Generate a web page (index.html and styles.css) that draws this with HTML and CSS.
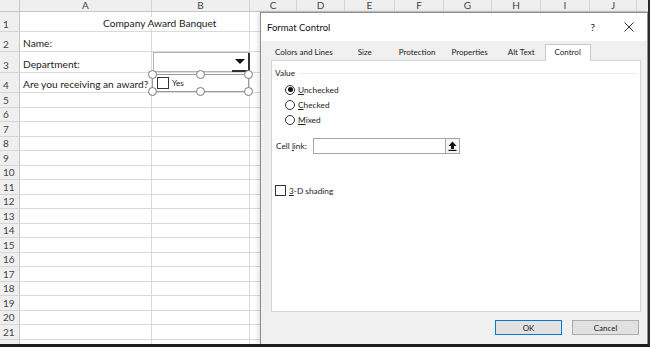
FILE: index.html
```html
<!DOCTYPE html>
<html lang="en">
<head>
    <meta charset="UTF-8">
    <title>Format Control</title>
    <link rel="stylesheet" href="styles.css">
</head>
<body>
    <div class="screen">
        <!-- worksheet -->
        <div class="sheet">
            <div class="colhead">
                <div class="corner"></div>
                <div class="ch col-a">A</div>
                <div class="ch col-b">B</div>
                <div class="ch" style="width:47px">C</div>
                <div class="ch" style="width:48px">D</div>
                <div class="ch" style="width:50px">E</div>
                <div class="ch" style="width:49px">F</div>
                <div class="ch" style="width:48px">G</div>
                <div class="ch" style="width:49px">H</div>
                <div class="ch" style="width:49px">I</div>
                <div class="ch" style="width:47px">J</div>
                <div class="ch rest"></div>
            </div>
            <div class="row tall"><div class="rh">1</div><div class="cell col-a"><span class="banner">Company Award Banquet</span></div><div class="cell col-b"></div><div class="cell col-c"></div></div>
            <div class="row tall"><div class="rh">2</div><div class="cell col-a">Name:</div><div class="cell col-b"></div><div class="cell col-c"></div></div>
            <div class="row tall r3"><div class="rh">3</div><div class="cell col-a">Department:</div><div class="cell col-b"></div><div class="cell col-c"></div></div>
            <div class="row tall"><div class="rh">4</div><div class="cell col-a">Are you receiving an award?</div><div class="cell col-b"></div><div class="cell col-c"></div></div>
            <div class="row"><div class="rh">5</div><div class="cell col-a"></div><div class="cell col-b"></div><div class="cell col-c"></div></div>
            <div class="row"><div class="rh">6</div><div class="cell col-a"></div><div class="cell col-b"></div><div class="cell col-c"></div></div>
            <div class="row"><div class="rh">7</div><div class="cell col-a"></div><div class="cell col-b"></div><div class="cell col-c"></div></div>
            <div class="row"><div class="rh">8</div><div class="cell col-a"></div><div class="cell col-b"></div><div class="cell col-c"></div></div>
            <div class="row"><div class="rh">9</div><div class="cell col-a"></div><div class="cell col-b"></div><div class="cell col-c"></div></div>
            <div class="row"><div class="rh">10</div><div class="cell col-a"></div><div class="cell col-b"></div><div class="cell col-c"></div></div>
            <div class="row"><div class="rh">11</div><div class="cell col-a"></div><div class="cell col-b"></div><div class="cell col-c"></div></div>
            <div class="row"><div class="rh">12</div><div class="cell col-a"></div><div class="cell col-b"></div><div class="cell col-c"></div></div>
            <div class="row"><div class="rh">13</div><div class="cell col-a"></div><div class="cell col-b"></div><div class="cell col-c"></div></div>
            <div class="row"><div class="rh">14</div><div class="cell col-a"></div><div class="cell col-b"></div><div class="cell col-c"></div></div>
            <div class="row"><div class="rh">15</div><div class="cell col-a"></div><div class="cell col-b"></div><div class="cell col-c"></div></div>
            <div class="row"><div class="rh">16</div><div class="cell col-a"></div><div class="cell col-b"></div><div class="cell col-c"></div></div>
            <div class="row"><div class="rh">17</div><div class="cell col-a"></div><div class="cell col-b"></div><div class="cell col-c"></div></div>
            <div class="row"><div class="rh">18</div><div class="cell col-a"></div><div class="cell col-b"></div><div class="cell col-c"></div></div>
            <div class="row"><div class="rh">19</div><div class="cell col-a"></div><div class="cell col-b"></div><div class="cell col-c"></div></div>
            <div class="row"><div class="rh">20</div><div class="cell col-a"></div><div class="cell col-b"></div><div class="cell col-c"></div></div>
            <div class="row"><div class="rh">21</div><div class="cell col-a"></div><div class="cell col-b"></div><div class="cell col-c"></div></div>
            <div class="row"><div class="rh"></div><div class="cell col-a"></div><div class="cell col-b"></div><div class="cell col-c"></div></div>
        </div>

        <!-- form controls drawn on the sheet -->
        <div class="combo">
            <div class="combo-btn"><span class="tri"></span></div>
        </div>

        <div class="form-check">
            <span class="box"></span><span class="yes">Yes</span>
            <span class="handle h1"></span><span class="handle h2"></span><span class="handle h3"></span>
            <span class="handle h4"></span><span class="handle h5"></span><span class="handle h6"></span>
        </div>

        <!-- Format Control dialog -->
        <div class="dialog">
            <div class="titlebar">
                <span class="title">Format Control</span>
                <span class="help">?</span>
                <svg class="close" width="10" height="10" viewBox="0 0 10 10">
                    <path d="M0.5 0.5L9.5 9.5M9.5 0.5L0.5 9.5" stroke="#333" stroke-width="1"/>
                </svg>
            </div>
            <div class="tabs">
                <div class="tab t-colors">Colors and Lines</div>
                <div class="tab t-size">Size</div>
                <div class="tab t-prot">Protection</div>
                <div class="tab t-prop">Properties</div>
                <div class="tab t-alt">Alt Text</div>
                <div class="tab active">Control</div>
            </div>
            <div class="panel">
                <div class="group">
                    <span class="group-label">Value</span>
                    <span class="group-line"></span>
                </div>
                <div class="radios">
                    <div class="radio on"><span class="dot"></span><span><u>U</u>nchecked</span></div>
                    <div class="radio"><span class="dot"></span><span><u>C</u>hecked</span></div>
                    <div class="radio"><span class="dot"></span><span><u>M</u>ixed</span></div>
                </div>
                <div class="link-row">
                    <span class="link-label">Cell <u>l</u>ink:</span>
                    <span class="link-input"></span>
                    <span class="link-btn">
                        <svg width="9" height="10" viewBox="0 0 9 10">
                            <path d="M4.5 0.5L8.5 5H6V8H3V5H0.5Z" fill="#111"/>
                            <rect x="0.5" y="8.8" width="8" height="1.2" fill="#111"/>
                        </svg>
                    </span>
                </div>
                <div class="shade">
                    <span class="chk"></span><span><u>3</u>-D shading</span>
                </div>
            </div>
            <div class="buttons">
                <button class="btn primary">OK</button>
                <button class="btn">Cancel</button>
            </div>
        </div>
    </div>
</body>
</html>
```

FILE: styles.css
```css
/* Excel sheet + Format Control dialog */
body {
    margin: 0;
    padding: 0;
    background: #fff;
    font-family: Lato, 'Liberation Sans', sans-serif;
}

.screen {
    position: relative;
    width: 650px;
    height: 347px;
    overflow: hidden;
    background: #fff;
    box-sizing: border-box;
    border-right: 2px solid #2b2b2b;
    border-bottom: 3px solid #1e1e1e;
}

/* ---------- worksheet ---------- */
.sheet {
    font-size: 10.2px;
    color: #222;
}

.colhead {
    display: flex;
    height: 12px;
    background: #efefef;
    border-bottom: 1px solid #c6c6c6;
    box-sizing: border-box;
}

.corner {
    width: 20px;
    flex: none;
    border-right: 1px solid #c6c6c6;
    box-sizing: border-box;
}

.ch {
    flex: none;
    box-sizing: border-box;
    border-right: 1px solid #d4d4d4;
    font-size: 10px;
    color: #444;
    text-align: center;
    line-height: 10px;
}

.ch.rest {
    flex: 1;
    border: none;
}

.col-a { width: 132px; }
.col-b { width: 98px; }
.col-c { flex: 1; }

.row {
    display: flex;
    height: 14.5px;
}

.row.tall { height: 20px; }
.row.r3 { height: 21px; }

.rh {
    width: 20px;
    flex: none;
    box-sizing: border-box;
    background: #efefef;
    border-right: 1px solid #c6c6c6;
    border-bottom: 1px solid #d6d6d6;
    color: #444;
    font-size: 10px;
    padding-left: 3px;
    display: flex;
    align-items: flex-end;
    padding-bottom: 1px;
}

.cell {
    flex: none;
    box-sizing: border-box;
    border-right: 1px solid #dadada;
    border-bottom: 1px solid #dadada;
    padding: 0 0 2px 3px;
    display: flex;
    align-items: flex-end;
    white-space: nowrap;
}

.cell.col-c { flex: 1; }

.banner {
    margin-left: 80px;
    position: relative;
    z-index: 1;
    background: #fff;
}

/* combo box in B3 */
.combo {
    position: absolute;
    left: 153px;
    top: 52px;
    width: 97px;
    height: 20px;
    box-sizing: border-box;
    border: 1px solid #b4b4b4;
    border-right: none;
    background: #fff;
    display: flex;
    justify-content: flex-end;
}

.combo-btn {
    width: 18px;
    height: 19px;
    box-sizing: border-box;
    border-right: 2px solid #333;
    border-bottom: 2px solid #333;
    display: flex;
    align-items: center;
    justify-content: center;
}

.tri {
    width: 0;
    height: 0;
    border-left: 5px solid transparent;
    border-right: 5px solid transparent;
    border-top: 5px solid #111;
}

/* selected check box control in B4 */
.form-check {
    position: absolute;
    left: 152px;
    top: 74px;
    width: 97px;
    height: 18px;
    box-sizing: border-box;
    border: 1px solid #9a9a9a;
    display: flex;
    align-items: center;
    padding-left: 4px;
    font-size: 8px;
    color: #222;
}

.form-check .box {
    width: 10px;
    height: 10px;
    border: 1px solid #333;
    background: #fff;
    margin-right: 3px;
}

.handle {
    position: absolute;
    width: 7px;
    height: 7px;
    border: 1px solid #777;
    border-radius: 50%;
    background: #fff;
}

.h1 { left: -5px; top: -5px; }
.h2 { left: 43px; top: -5px; }
.h3 { right: -5px; top: -5px; }
.h4 { left: -5px; bottom: -5px; }
.h5 { left: 43px; bottom: -5px; }
.h6 { right: -5px; bottom: -5px; }

/* ---------- dialog ---------- */
.dialog {
    position: absolute;
    left: 260px;
    top: 12px;
    width: 388px;
    height: 333px;
    box-sizing: border-box;
    border: 1px solid #8f8f8f;
    background: #f0f0f0;
    box-shadow: -2px 0 4px rgba(0, 0, 0, 0.12);
    font-size: 8.3px;
    color: #222;
    display: flex;
    flex-direction: column;
}

.titlebar {
    height: 28px;
    background: #fff;
    display: flex;
    align-items: center;
    padding: 0 13px 0 6px;
    font-size: 9.5px;
    color: #111;
}

.title { flex: 1; }

.help {
    font-size: 10px;
    margin-right: 29px;
}

.close { display: block; }

.tabs {
    display: flex;
    align-items: flex-end;
    padding: 3px 0 0 4px;
    height: 16px;
    font-size: 8px;
}

.tab {
    height: 15px;
    line-height: 15px;
    padding: 0 11px;
    color: #222;
}

.t-colors { padding-left: 10px; padding-right: 14px; }
.t-size { padding-right: 16px; }
.t-prot { padding-right: 5px; }
.t-prop { padding-right: 9px; }
.t-alt { padding-right: 10px; }

.tab.active {
    background: #fff;
    border: 1px solid #c8c8c8;
    border-bottom: none;
    height: 16px;
    padding: 0 9px;
    margin-bottom: -1px;
    position: relative;
    z-index: 1;
}

.panel {
    margin: 0 6px 0 10px;
    height: 252px;
    box-sizing: border-box;
    background: #fff;
    border: 1px solid #d5d5d5;
    padding: 7px 3px 0 3px;
}

.group {
    display: flex;
    align-items: center;
    gap: 4px;
}

.group-line {
    flex: 1;
    border-top: 1px solid #ececec;
}

.radios {
    padding: 6px 0 0 10px;
    display: flex;
    flex-direction: column;
    gap: 4px;
}

.radio {
    display: flex;
    align-items: center;
    height: 11px;
}

.radio .dot {
    width: 10px;
    height: 10px;
    border: 1px solid #333;
    border-radius: 50%;
    margin-right: 3px;
    box-sizing: border-box;
    background: #fff;
    display: flex;
    align-items: center;
    justify-content: center;
}

.radio.on .dot::after {
    content: "";
    width: 5px;
    height: 5px;
    border-radius: 50%;
    background: #111;
}

.link-row {
    display: flex;
    align-items: center;
    margin-top: 13px;
    height: 16px;
}

.link-label {
    width: 37px;
    padding-left: 1px;
}

.link-input {
    width: 132px;
    height: 16px;
    box-sizing: border-box;
    border: 1px solid #a6a6a6;
    border-right: none;
}

.link-btn {
    width: 15px;
    height: 16px;
    box-sizing: border-box;
    border: 1px solid #a6a6a6;
    background: #f4f4f4;
    display: flex;
    align-items: center;
    justify-content: center;
}

.shade {
    display: flex;
    align-items: center;
    margin-top: 31px;
}

.shade .chk {
    width: 11px;
    height: 11px;
    box-sizing: border-box;
    border: 1px solid #333;
    margin-right: 3px;
}

.buttons {
    display: flex;
    justify-content: flex-end;
    gap: 10px;
    padding: 8px 8px 0 0;
}

.btn {
    width: 67px;
    height: 15px;
    box-sizing: border-box;
    border: 1px solid #adadad;
    background: #e1e1e1;
    font-family: Lato, 'Liberation Sans', sans-serif;
    font-size: 8px;
    color: #222;
    padding: 0;
}

.btn.primary {
    border: 1px solid #0078d7;
}
```
